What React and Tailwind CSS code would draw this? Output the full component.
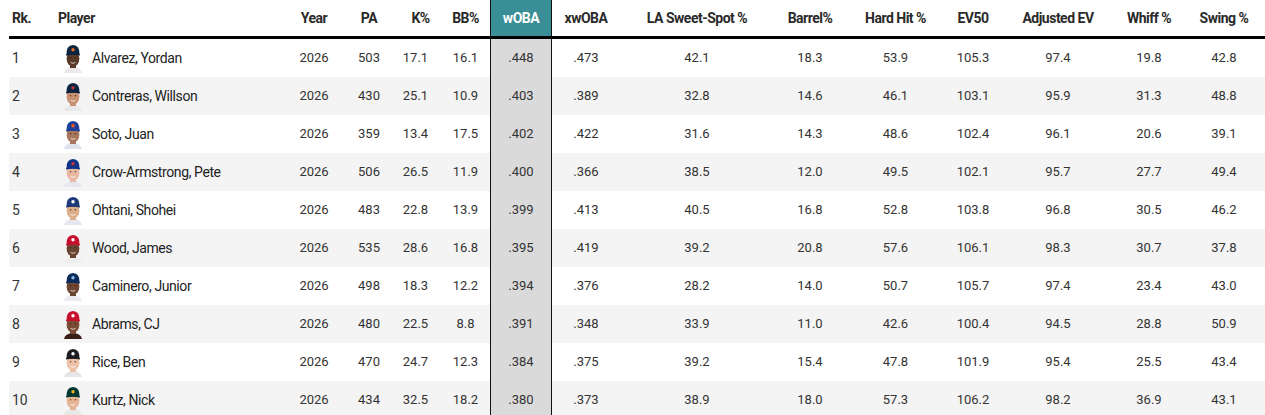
import React from "react";

const COLS =
  "grid grid-cols-[41px_240px_48px_62px_41px_49px_62px_68px_154px_72px_99px_56px_114px_68px_82px]";

const rows = [
  { rk: 1, name: "Alvarez, Yordan", pa: 503, k: "17.1", bb: "16.1", woba: ".448", xwoba: ".473", la: "42.1", barrel: "18.3", hh: "53.9", ev50: "105.3", aev: "97.4", whiff: "19.8", swing: "42.8", cap: "#0c2340", logo: "#eb6e1f", skin: "#5a3a26", jersey: "#e9e9ec" },
  { rk: 2, name: "Contreras, Willson", pa: 430, k: "25.1", bb: "10.9", woba: ".403", xwoba: ".389", la: "32.8", barrel: "14.6", hh: "46.1", ev50: "103.1", aev: "95.9", whiff: "31.3", swing: "48.8", cap: "#0c2340", logo: "#bd3039", skin: "#c99072", jersey: "#e9e9ec" },
  { rk: 3, name: "Soto, Juan", pa: 359, k: "13.4", bb: "17.5", woba: ".402", xwoba: ".422", la: "31.6", barrel: "14.3", hh: "48.6", ev50: "102.4", aev: "96.1", whiff: "20.6", swing: "39.1", cap: "#1d3f99", logo: "#ff5910", skin: "#a8765a", jersey: "#dfe3ee" },
  { rk: 4, name: "Crow-Armstrong, Pete", pa: 506, k: "26.5", bb: "11.9", woba: ".400", xwoba: ".366", la: "38.5", barrel: "12.0", hh: "49.5", ev50: "102.1", aev: "95.7", whiff: "27.7", swing: "49.4", cap: "#0e3386", logo: "#cc3433", skin: "#e8b8a2", jersey: "#e5e8f0" },
  { rk: 5, name: "Ohtani, Shohei", pa: 483, k: "22.8", bb: "13.9", woba: ".399", xwoba: ".413", la: "40.5", barrel: "16.8", hh: "52.8", ev50: "103.8", aev: "96.8", whiff: "30.5", swing: "46.2", cap: "#1e3a78", logo: "#ffffff", skin: "#dcae8a", jersey: "#e4e7ee" },
  { rk: 6, name: "Wood, James", pa: 535, k: "28.6", bb: "16.8", woba: ".395", xwoba: ".419", la: "39.2", barrel: "20.8", hh: "57.6", ev50: "106.1", aev: "98.3", whiff: "30.7", swing: "37.8", cap: "#c8102e", logo: "#ffffff", skin: "#6a4533", jersey: "#eeeeee" },
  { rk: 7, name: "Caminero, Junior", pa: 498, k: "18.3", bb: "12.2", woba: ".394", xwoba: ".376", la: "28.2", barrel: "14.0", hh: "50.7", ev50: "105.7", aev: "97.4", whiff: "23.4", swing: "43.0", cap: "#092c5c", logo: "#8fbce6", skin: "#6e4530", jersey: "#e9ebf0" },
  { rk: 8, name: "Abrams, CJ", pa: 480, k: "22.5", bb: "8.8", woba: ".391", xwoba: ".348", la: "33.9", barrel: "11.0", hh: "42.6", ev50: "100.4", aev: "94.5", whiff: "28.8", swing: "50.9", cap: "#c8102e", logo: "#ffffff", skin: "#7a4b35", jersey: "#3a1f18" },
  { rk: 9, name: "Rice, Ben", pa: 470, k: "24.7", bb: "12.3", woba: ".384", xwoba: ".375", la: "39.2", barrel: "15.4", hh: "47.8", ev50: "101.9", aev: "95.4", whiff: "25.5", swing: "43.4", cap: "#1c1c22", logo: "#ffffff", skin: "#ecc3a8", jersey: "#e6e6e8" },
  { rk: 10, name: "Kurtz, Nick", pa: 434, k: "32.5", bb: "18.2", woba: ".380", xwoba: ".373", la: "38.9", barrel: "18.0", hh: "57.3", ev50: "106.2", aev: "98.2", whiff: "36.9", swing: "43.1", cap: "#003831", logo: "#efb21e", skin: "#e5b596", jersey: "#e8e8e6" },
];

function Headshot({ cap, logo, skin, jersey }) {
  return (
    <svg width="20" height="30" viewBox="0 0 20 30" className="shrink-0">
      <path d="M1 30 Q2 24.5 10 24 Q18 24.5 19 30 Z" fill={jersey} />
      <rect x="7" y="18" width="6" height="7" fill={skin} />
      <ellipse cx="10" cy="15.5" rx="6.4" ry="8" fill={skin} />
      <path d="M3.4 11.5 Q3.2 2.2 10 2 Q16.8 2.2 16.6 11.5 Z" fill={cap} />
      <path d="M3 11.2 Q10 9.2 17 11.2 L17 12.5 Q10 10.8 3 12.5 Z" fill={cap} />
      <circle cx="10" cy="6.8" r="1.7" fill={logo} />
      <ellipse cx="7.6" cy="14.8" rx="0.8" ry="0.55" fill="#2a1a12" />
      <ellipse cx="12.4" cy="14.8" rx="0.8" ry="0.55" fill="#2a1a12" />
      <path d="M7.6 19.5 Q10 21 12.4 19.5" stroke="#ffffff" strokeWidth="0.9" fill="none" opacity="0.8" />
    </svg>
  );
}

export default function App() {
  return (
    <div className="bg-white w-[1265px] h-[415px] overflow-hidden pl-[9px] font-['Roboto',_'Liberation_Sans',_sans-serif] text-[13px]">
      <div className={`${COLS} h-[39px] border-b-[3px] border-black items-stretch font-bold text-[14px] tracking-[-0.5px] text-[#2a2a2a]`}>
        <div className="flex items-center pl-[3px]">Rk.</div>
        <div className="flex items-center pl-[8px]">Player</div>
        <div className="flex items-center justify-center">Year</div>
        <div className="flex items-center justify-center">PA</div>
        <div className="flex items-center justify-center">K%</div>
        <div className="flex items-center justify-center">BB%</div>
        <div className="flex items-center justify-center bg-[#3a8e95] text-white border-x border-[#111]">wOBA</div>
        <div className="flex items-center justify-center">xwOBA</div>
        <div className="flex items-center justify-center">LA Sweet-Spot %</div>
        <div className="flex items-center justify-center">Barrel%</div>
        <div className="flex items-center justify-center">Hard Hit %</div>
        <div className="flex items-center justify-center">EV50</div>
        <div className="flex items-center justify-center">Adjusted EV</div>
        <div className="flex items-center justify-center">Whiff %</div>
        <div className="flex items-center justify-center">Swing %</div>
      </div>
      {rows.map((r, i) => (
        <div
          key={r.rk}
          className={`${COLS} h-[38px] items-stretch text-[#333] ${i % 2 === 1 ? "bg-[#f4f4f4]" : "bg-white"}`}
        >
          <div className="flex items-center pl-[3px] text-[14px]">{r.rk}</div>
          <div className="flex items-center pl-[13px] gap-[9px]">
            <Headshot cap={r.cap} logo={r.logo} skin={r.skin} jersey={r.jersey} />
            <span className="text-[14px] tracking-[-0.4px] text-[#222]">{r.name}</span>
          </div>
          <div className="flex items-center justify-center">2026</div>
          <div className="flex items-center justify-center">{r.pa}</div>
          <div className="flex items-center justify-center pr-[10px]">{r.k}</div>
          <div className="flex items-center justify-center">{r.bb}</div>
          <div className="flex items-center justify-center bg-[#dadada] border-x border-[#111]">{r.woba}</div>
          <div className="flex items-center justify-center">{r.xwoba}</div>
          <div className="flex items-center justify-center">{r.la}</div>
          <div className="flex items-center justify-center">{r.barrel}</div>
          <div className="flex items-center justify-center">{r.hh}</div>
          <div className="flex items-center justify-center">{r.ev50}</div>
          <div className="flex items-center justify-center">{r.aev}</div>
          <div className="flex items-center justify-center">{r.whiff}</div>
          <div className="flex items-center justify-center">{r.swing}</div>
        </div>
      ))}
    </div>
  );
}
